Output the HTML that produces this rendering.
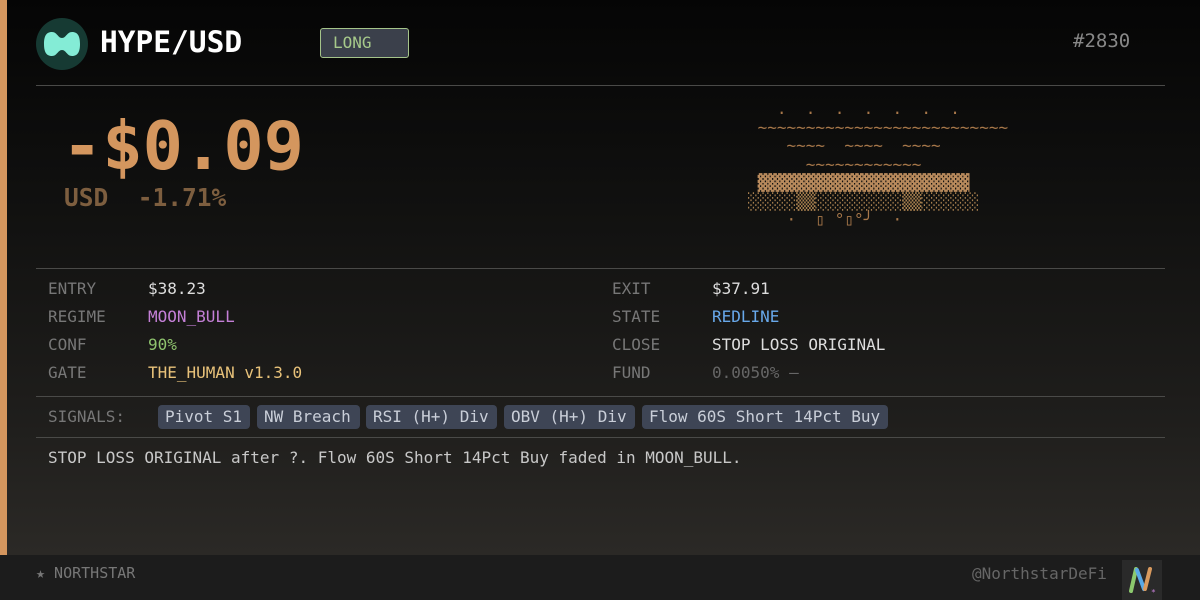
<!DOCTYPE html>
<html><head><meta charset="utf-8"><style>
*{margin:0;padding:0;box-sizing:border-box}
body{width:1200px;height:600px;overflow:hidden;position:relative;font-family:"DejaVu Sans Mono","Liberation Mono",monospace;background:linear-gradient(180deg,#050505 0%,#111110 35%,#1f1e1c 70%,#2b2926 92%);}
.bar{position:absolute;left:0;top:0;width:7px;height:555px;background:#d4965e}
.a{position:absolute;white-space:pre}
.hr{position:absolute;left:36px;width:1129px;height:1px;background:#4a4a48}
.lab{color:#777;font-size:16px}
.val{font-size:16px}
.chip{position:absolute;top:405px;height:24px;line-height:24px;background:#3e4555;color:#c9ced8;border-radius:4px;padding:0 7px;font-size:16px}
.foot{position:absolute;left:0;top:555px;width:1200px;height:45px;background:#1c1c1c}
</style></head><body>
<div class="bar"></div>
<svg class="a" style="left:36px;top:18px" width="52" height="52" viewBox="0 0 52 52"><circle cx="26" cy="26" r="26" fill="#163a33"/><path d="M8 26c0-9 3-12 8-12s6 6 10 6 5-6 10-6 8 3 8 12-3 12-8 12-6-6-10-6-5 6-10 6-8-3-8-12z" fill="#84ecd6"/></svg>
<div class="a" style="left:100px;top:25px;font-size:29.5px;font-weight:bold;color:#fff">HYPE/USD</div>
<div class="a" style="left:320px;top:28px;width:89px;height:30px;background:#3b404b;border:1px solid #a5c48a;border-radius:3px;color:#a6c98a;font-size:16px;line-height:28px;padding-left:12px">LONG</div>
<div class="a" style="left:1073px;top:30px;font-size:19px;color:#888">#2830</div>
<div class="hr" style="top:85px"></div>
<div class="a" style="left:62px;top:106px;font-size:67px;font-weight:bold;color:#d4965e;line-height:80px">-$0.09</div>
<div class="a" style="left:64px;top:183px;font-size:24.5px;font-weight:bold;color:#7d5e3f">USD  -1.71%</div>
<pre class="a" style="left:748px;top:100px;font-size:16px;line-height:18.5px;color:#a8784a;font-family:'DejaVu Sans Mono',monospace">   .  .  .  .  .  .  .
 ~~~~~~~~~~~~~~~~~~~~~~~~~~
    ~~~~  ~~~~  ~~~~
      ~~~~~~~~~~~~
<span style="color:#b88a5c"> ▓▓▓▓▓▓▓▓▓▓▓▓▓▓▓▓▓▓▓▓▓▓</span>
<span style="color:#a8804f">░░░░░▒▒░░░░░░░░░▒▒░░░░░░</span>
    ·  ▯ °▯°╯  ·</pre>
<div class="hr" style="top:268px"></div>
<div class="a lab" style="left:48px;top:279px">ENTRY</div><div class="a val" style="left:148px;top:279px;color:#ddd">$38.23</div>
<div class="a lab" style="left:48px;top:307px">REGIME</div><div class="a val" style="left:148px;top:307px;color:#c47fd6">MOON_BULL</div>
<div class="a lab" style="left:48px;top:335px">CONF</div><div class="a val" style="left:148px;top:335px;color:#8fc46e">90%</div>
<div class="a lab" style="left:48px;top:363px">GATE</div><div class="a val" style="left:148px;top:363px;color:#e8c27a">THE_HUMAN v1.3.0</div>
<div class="a lab" style="left:612px;top:279px">EXIT</div><div class="a val" style="left:712px;top:279px;color:#ddd">$37.91</div>
<div class="a lab" style="left:612px;top:307px">STATE</div><div class="a val" style="left:712px;top:307px;color:#68a8ea">REDLINE</div>
<div class="a lab" style="left:612px;top:335px">CLOSE</div><div class="a val" style="left:712px;top:335px;color:#ddd">STOP LOSS ORIGINAL</div>
<div class="a lab" style="left:612px;top:363px">FUND</div><div class="a val" style="left:712px;top:363px;color:#666">0.0050% —</div>
<div class="hr" style="top:396px"></div>
<div class="a lab" style="left:48px;top:407px">SIGNALS:</div>
<div class="chip" style="left:158px;width:92px">Pivot S1</div>
<div class="chip" style="left:257px;width:103px">NW Breach</div>
<div class="chip" style="left:366px;width:131px">RSI (H+) Div</div>
<div class="chip" style="left:504px;width:131px">OBV (H+) Div</div>
<div class="chip" style="left:642px;width:246px">Flow 60S Short 14Pct Buy</div>
<div class="hr" style="top:437px"></div>
<div class="a val" style="left:48px;top:448px;color:#c8c8c8">STOP LOSS ORIGINAL after ?. Flow 60S Short 14Pct Buy faded in MOON_BULL.</div>
<div class="foot"></div>
<div class="a" style="left:36px;top:564px;font-size:15px;color:#777">★ NORTHSTAR</div>
<div class="a" style="left:972px;top:564px;font-size:16px;color:#666">@NorthstarDeFi</div>
<svg class="a" style="left:1122px;top:560px" width="40" height="40" viewBox="0 0 40 40"><rect width="40" height="40" fill="#2a2a2a"/><path d="M9 31L14 9" stroke="#8cc96e" stroke-width="4" stroke-linecap="round"/><path d="M15 10L22 29" stroke="#5aa9e6" stroke-width="4" stroke-linecap="round"/><path d="M23 29L28 9" stroke="#d99a5e" stroke-width="4" stroke-linecap="round"/><text x="29" y="35" font-size="8" fill="#c47fd6">*</text></svg>
</body></html>
